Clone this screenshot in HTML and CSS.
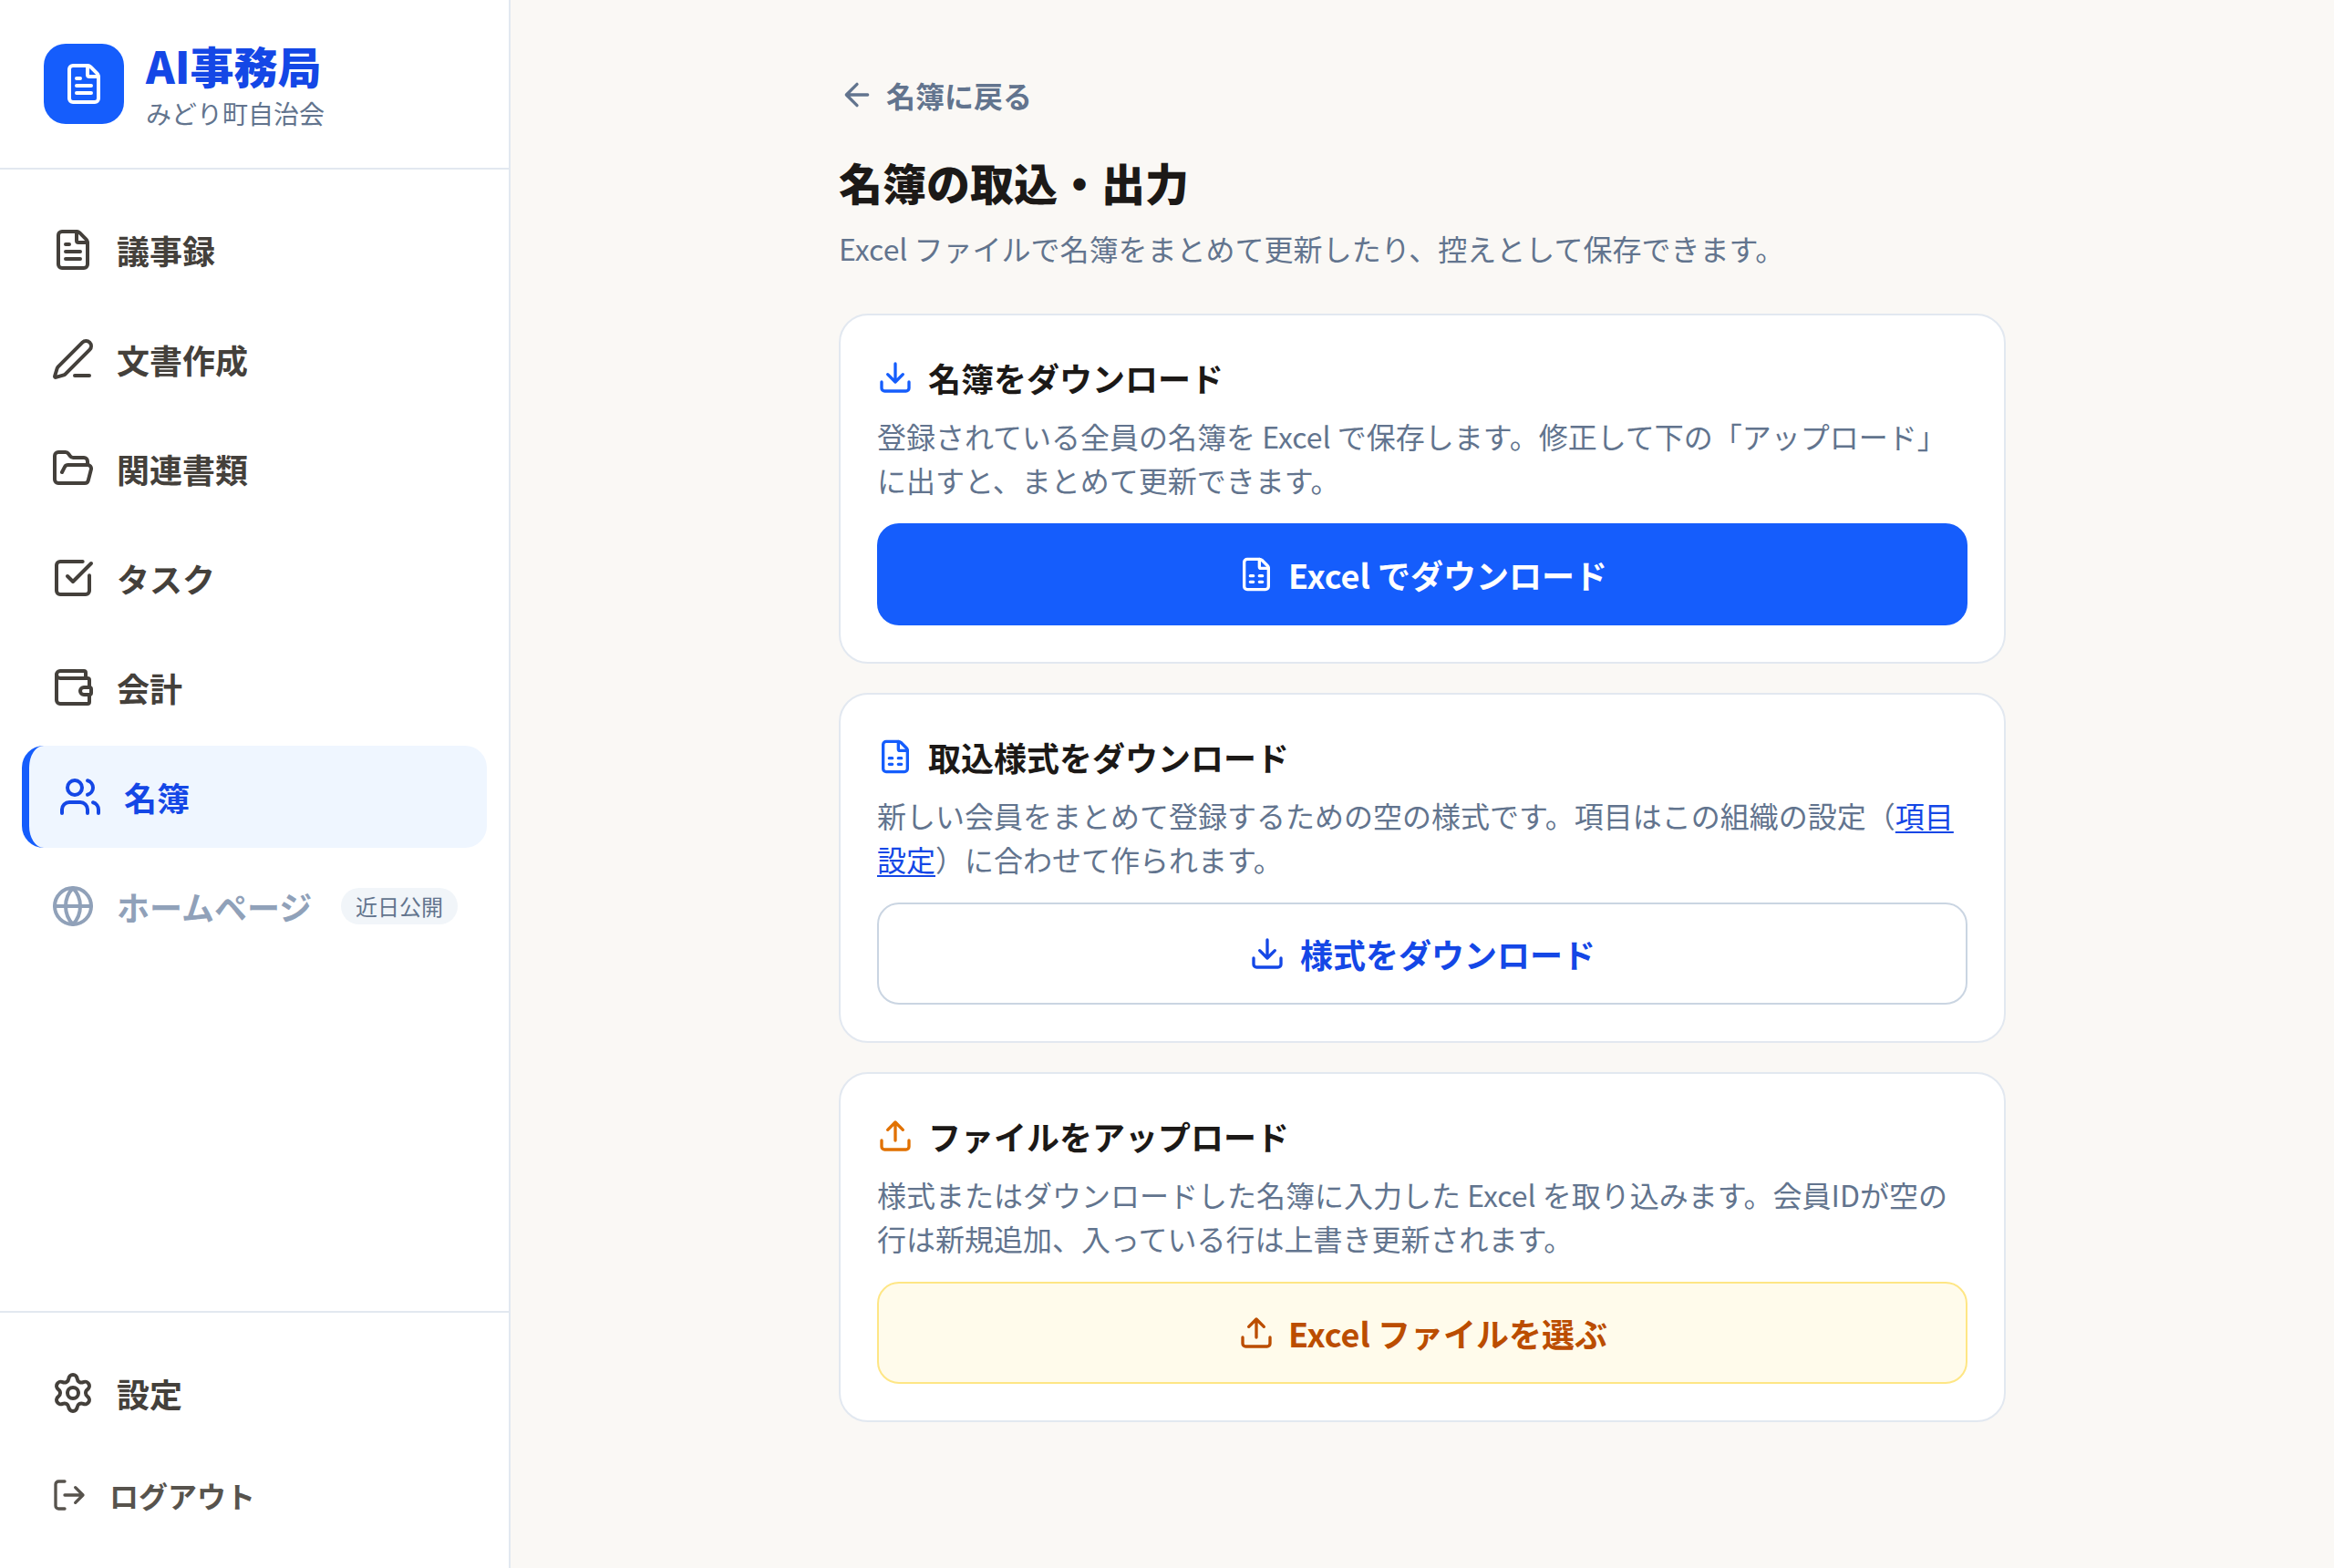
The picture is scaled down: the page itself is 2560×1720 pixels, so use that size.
FILE: index.html
```html
<!DOCTYPE html>
<html lang="ja">
<head>
<meta charset="utf-8">
<title>名簿の取込・出力 - AI事務局</title>
<link rel="stylesheet" href="styles.css">
</head>
<body>
<svg class="sprite" aria-hidden="true">
  <symbol id="file-text" viewBox="0 0 24 24"><path d="M6 22a2 2 0 0 1-2-2V4a2 2 0 0 1 2-2h8a2.4 2.4 0 0 1 1.704.706l3.588 3.588A2.4 2.4 0 0 1 20 8v12a2 2 0 0 1-2 2z"/><path d="M14 2v5a1 1 0 0 0 1 1h5M10 9H8M16 13H8M16 17H8"/></symbol>
  <symbol id="sheet" viewBox="0 0 24 24"><path d="M6 22a2 2 0 0 1-2-2V4a2 2 0 0 1 2-2h8a2.4 2.4 0 0 1 1.704.706l3.588 3.588A2.4 2.4 0 0 1 20 8v12a2 2 0 0 1-2 2z"/><path d="M14 2v5a1 1 0 0 0 1 1h5M8 13h2M14 13h2M8 17h2M14 17h2"/></symbol>
  <symbol id="pen" viewBox="0 0 24 24"><path d="M13 21h8"/><path d="M21.174 6.812a1 1 0 0 0-3.986-3.987L3.842 16.174a2 2 0 0 0-.5.83l-1.321 4.352a.5.5 0 0 0 .623.622l4.353-1.32a2 2 0 0 0 .83-.497z"/></symbol>
  <symbol id="folder" viewBox="0 0 24 24"><path d="m6 14 1.5-2.9A2 2 0 0 1 9.24 10H20a2 2 0 0 1 1.94 2.5l-1.54 6a2 2 0 0 1-1.95 1.5H4a2 2 0 0 1-2-2V5a2 2 0 0 1 2-2h3.9a2 2 0 0 1 1.69.9l.81 1.2a2 2 0 0 0 1.67.9H18a2 2 0 0 1 2 2v2"/></symbol>
  <symbol id="check" viewBox="0 0 24 24"><path d="M21 10.656V19a2 2 0 0 1-2 2H5a2 2 0 0 1-2-2V5a2 2 0 0 1 2-2h12.344"/><path d="m9 11 3 3L22 4"/></symbol>
  <symbol id="wallet" viewBox="0 0 24 24"><path d="M19 7V4a1 1 0 0 0-1-1H5a2 2 0 0 0 0 4h15a1 1 0 0 1 1 1v4h-3a2 2 0 0 0 0 4h3a1 1 0 0 0 1-1v-2a1 1 0 0 0-1-1"/><path d="M3 5v14a2 2 0 0 0 2 2h15a1 1 0 0 0 1-1v-4"/></symbol>
  <symbol id="users" viewBox="0 0 24 24"><path d="M16 21v-2a4 4 0 0 0-4-4H6a4 4 0 0 0-4 4v2M16 3.128a4 4 0 0 1 0 7.744M22 21v-2a4 4 0 0 0-3-3.87"/><circle cx="9" cy="7" r="4"/></symbol>
  <symbol id="globe" viewBox="0 0 24 24"><circle cx="12" cy="12" r="10"/><path d="M12 2a14.5 14.5 0 0 0 0 20 14.5 14.5 0 0 0 0-20M2 12h20"/></symbol>
  <symbol id="gear" viewBox="0 0 24 24"><path d="M9.671 4.136a2.34 2.34 0 0 1 4.659 0 2.34 2.34 0 0 0 3.319 1.915 2.34 2.34 0 0 1 2.33 4.033 2.34 2.34 0 0 0 0 3.831 2.34 2.34 0 0 1-2.33 4.033 2.34 2.34 0 0 0-3.319 1.915 2.34 2.34 0 0 1-4.659 0 2.34 2.34 0 0 0-3.32-1.915 2.34 2.34 0 0 1-2.33-4.033 2.34 2.34 0 0 0 0-3.831A2.34 2.34 0 0 1 6.35 6.051a2.34 2.34 0 0 0 3.319-1.915"/><circle cx="12" cy="12" r="3"/></symbol>
  <symbol id="logout" viewBox="0 0 24 24"><path d="m16 17 5-5-5-5M21 12H9M9 21H5a2 2 0 0 1-2-2V5a2 2 0 0 1 2-2h4"/></symbol>
  <symbol id="back" viewBox="0 0 24 24"><path d="m12 19-7-7 7-7M19 12H5"/></symbol>
  <symbol id="download" viewBox="0 0 24 24"><path d="M12 15V3M21 15v4a2 2 0 0 1-2 2H5a2 2 0 0 1-2-2v-4M7 10l5 5 5-5"/></symbol>
  <symbol id="upload" viewBox="0 0 24 24"><path d="M12 3v12M17 8l-5-5-5 5M21 15v4a2 2 0 0 1-2 2H5a2 2 0 0 1-2-2v-4"/></symbol>
</svg>
<div class="app">
  <aside class="sidebar">
    <header class="brand">
      <div class="logo"><svg class="icon icon-lg"><use href="#file-text"/></svg></div>
      <div>
        <div class="brand-name">AI事務局</div>
        <div class="brand-org">みどり町自治会</div>
      </div>
    </header>
    <nav class="nav">
      <a class="nav-item"><svg class="icon icon-lg"><use href="#file-text"/></svg><span>議事録</span></a>
      <a class="nav-item"><svg class="icon icon-lg"><use href="#pen"/></svg><span>文書作成</span></a>
      <a class="nav-item"><svg class="icon icon-lg"><use href="#folder"/></svg><span>関連書類</span></a>
      <a class="nav-item"><svg class="icon icon-lg"><use href="#check"/></svg><span>タスク</span></a>
      <a class="nav-item"><svg class="icon icon-lg"><use href="#wallet"/></svg><span>会計</span></a>
      <a class="nav-item active"><svg class="icon icon-lg"><use href="#users"/></svg><span>名簿</span></a>
      <a class="nav-item disabled"><svg class="icon icon-lg"><use href="#globe"/></svg><span>ホームページ</span><span class="badge">近日公開</span></a>
    </nav>
    <div class="nav nav-bottom">
      <a class="nav-item"><svg class="icon icon-lg"><use href="#gear"/></svg><span>設定</span></a>
      <a class="nav-item logout"><svg class="icon"><use href="#logout"/></svg><span>ログアウト</span></a>
    </div>
  </aside>
  <main class="main">
    <div class="content">
      <a class="back"><svg class="icon"><use href="#back"/></svg><span>名簿に戻る</span></a>
      <h1 class="title">名簿の取込・出力</h1>
      <p class="lead">Excel ファイルで名簿をまとめて更新したり、控えとして保存できます。</p>
      <div class="cards">
        <section class="card">
          <h2 class="card-title"><svg class="icon blue"><use href="#download"/></svg><span>名簿をダウンロード</span></h2>
          <p class="card-text">登録されている全員の名簿を Excel で保存します。修正して下の「アップロード」に出すと、まとめて更新できます。</p>
          <a class="button primary"><svg class="icon"><use href="#sheet"/></svg><span>Excel でダウンロード</span></a>
        </section>
        <section class="card">
          <h2 class="card-title"><svg class="icon blue"><use href="#sheet"/></svg><span>取込様式をダウンロード</span></h2>
          <p class="card-text">新しい会員をまとめて登録するための空の様式です。項目はこの組織の設定（<a class="link">項目設定</a>）に合わせて作られます。</p>
          <a class="button outline"><svg class="icon"><use href="#download"/></svg><span>様式をダウンロード</span></a>
        </section>
        <section class="card">
          <h2 class="card-title"><svg class="icon amber"><use href="#upload"/></svg><span>ファイルをアップロード</span></h2>
          <p class="card-text">様式またはダウンロードした名簿に入力した Excel を取り込みます。会員IDが空の行は新規追加、入っている行は上書き更新されます。</p>
          <a class="button warm"><svg class="icon"><use href="#upload"/></svg><span>Excel ファイルを選ぶ</span></a>
        </section>
      </div>
    </div>
  </main>
</div>
</body>
</html>
```
FILE: styles.css
```css
* { box-sizing: border-box; margin: 0; padding: 0; }

body {
  font-family: "Noto Sans CJK JP", sans-serif;
  font-size: 32px;
  line-height: 48px;
  color: #1c1917;
  background: #faf8f5;
}

.sprite { display: none; }

.icon {
  flex: none;
  width: 40px;
  height: 40px;
  fill: none;
  stroke: currentColor;
  stroke-width: 2;
  stroke-linecap: round;
  stroke-linejoin: round;
}
.icon-lg { width: 48px; height: 48px; }
.blue { color: #155dfc; }
.amber { color: #e17100; }

.app { display: flex; height: 1720px; }

/* Sidebar */
.sidebar {
  display: flex;
  flex-direction: column;
  flex: none;
  width: 560px;
  background: #fff;
  border-right: 2px solid #e2e8f0;
}
.brand {
  display: flex;
  align-items: center;
  gap: 24px;
  height: 186px;
  padding: 0 48px;
  border-bottom: 2px solid #e2e8f0;
}
.logo {
  display: flex;
  align-items: center;
  justify-content: center;
  width: 88px;
  height: 88px;
  border-radius: 24px;
  color: #fff;
  background: #155dfc;
}
.brand-name { padding-top: 1px; font-size: 48px; line-height: 60px; font-weight: 800; color: #1447e6; }
.brand-org { margin-top: 3px; font-size: 28px; line-height: 40px; color: #62748e; }

.nav { display: flex; flex-direction: column; gap: 8px; padding: 32px 24px; }
.nav-bottom { margin-top: auto; border-top: 2px solid #e2e8f0; }
.nav-item {
  display: flex;
  align-items: center;
  gap: 24px;
  height: 112px;
  padding: 0 32px;
  border-radius: 24px;
  font-size: 36px;
  font-weight: 700;
  color: #44403b;
}
.nav-item.active { color: #1447e6; background: #eff6ff; border-left: 8px solid #155dfc; }
.nav-item.disabled { color: #90a1b9; }
.nav-item.logout { height: 96px; font-size: 32px; color: #57534d; }
.badge {
  margin-left: auto;
  padding: 0 16px;
  border-radius: 20px;
  font-size: 24px;
  line-height: 40px;
  font-weight: 400;
  color: #62748e;
  background: #f1f5f9;
}

/* Content */
.main { flex: 1; display: flex; justify-content: center; padding-top: 80px; }
.content { width: 1280px; }
.back { display: flex; align-items: center; gap: 12px; font-weight: 700; color: #62748e; }
.title { margin-top: 40px; font-size: 48px; line-height: 62px; font-weight: 800; }
.lead { margin-top: 18px; color: #62748e; }
.cards { display: flex; flex-direction: column; gap: 32px; margin-top: 48px; }
.card { height: 384px; padding: 40px; border: 2px solid #e2e8f0; border-radius: 32px; background: #fff; }
.card-title { display: flex; align-items: center; gap: 16px; font-size: 36px; line-height: 56px; font-weight: 700; }
.card-text { margin: 12px 0 24px; color: #62748e; }
.link {
  color: #1447e6;
  text-decoration: underline;
  text-decoration-thickness: 2px;
  text-underline-offset: 4px;
}
.button {
  display: flex;
  align-items: center;
  justify-content: center;
  gap: 16px;
  height: 112px;
  border-radius: 24px;
  font-size: 36px;
  font-weight: 700;
}
.primary,
.warm { gap: 15px; padding-left: 1px; }
.primary { color: #fff; background: #155dfc; }
.outline { color: #1447e6; border: 2px solid #cad5e2; }
.warm { color: #bb4d00; background: #fffbeb; border: 2px solid #fee685; }
```
